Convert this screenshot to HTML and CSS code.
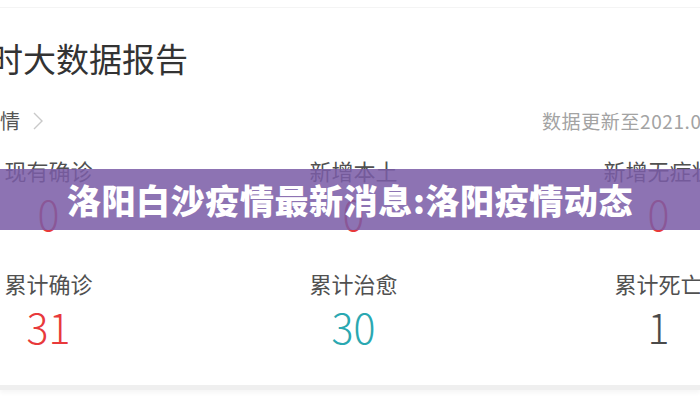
FILE: index.html
```html
<!DOCTYPE html>
<html lang="zh-CN">
<head>
    <meta charset="UTF-8">
    <meta name="viewport" content="width=device-width, initial-scale=1.0">
    <title>洛阳白沙疫情最新消息</title>
    <link rel="stylesheet" href="styles.css">
</head>
<body>
    <div class="card">
        <h2 class="title">实时大数据报告</h2>

        <div class="meta-row">
            <div class="region">疫情
                <svg class="chevron" width="10" height="18" viewBox="0 0 10 18">
                    <path d="M1 1 L9 9 L1 17" fill="none" stroke="#c9c9c9" stroke-width="1.4"/>
                </svg>
            </div>
            <div class="update">数据更新至2021.08.10</div>
        </div>

        <!-- 数据统计 -->
        <div class="stats">
            <div class="stat">
                <div class="label">现有确诊</div>
                <div class="num red">0</div>
            </div>
            <div class="stat">
                <div class="label">新增本土</div>
                <div class="num red">0</div>
            </div>
            <div class="stat">
                <div class="label">新增无症状</div>
                <div class="num red">0</div>
            </div>
            <div class="stat">
                <div class="label">累计确诊</div>
                <div class="num red">31</div>
            </div>
            <div class="stat">
                <div class="label">累计治愈</div>
                <div class="num teal">30</div>
            </div>
            <div class="stat">
                <div class="label">累计死亡</div>
                <div class="num dark">1</div>
            </div>
        </div>
    </div>

    <div class="banner">洛阳白沙疫情最新消息:洛阳疫情动态</div>
</body>
</html>
```

FILE: styles.css
```css
body {
    margin: 0;
    padding-top: 7px;
    width: 700px;
    height: 400px;
    overflow: hidden;
    position: relative;
    background: #fff;
    font-family: "Noto Sans CJK SC", "Liberation Sans", sans-serif;
}
.card {
    border-top: 1px solid #f4f4f4;
    border-bottom: 5px solid #efefef;
    box-shadow: 0 3px 4px rgba(0, 0, 0, 0.04);
    padding-bottom: 35px;
}
.title {
    margin: 30px 0 0 -43px;
    font-size: 33px;
    line-height: 40px;
    font-weight: normal;
    color: #333;
    white-space: nowrap;
}
.meta-row {
    display: grid;
    grid-template-columns: 562px max-content;
    align-items: center;
    margin: 28px 0 0 -20px;
    height: 24px;
}
.region {
    display: flex;
    align-items: center;
    font-size: 20px;
    color: #555;
}
.chevron {
    margin-left: 13px;
}
.update {
    font-size: 19px;
    letter-spacing: 0.6px;
    color: #a3a3a3;
    white-space: nowrap;
}
.stats {
    display: grid;
    grid-template-columns: repeat(3, 305px);
    row-gap: 32px;
    margin: 26px 0 0 -104px;
}
.stat {
    text-align: center;
}
.label {
    font-size: 22px;
    line-height: 28px;
    color: #505050;
    white-space: nowrap;
}
.num {
    margin-top: 5px;
    font-size: 41px;
    line-height: 48px;
    font-weight: 300;
}
.red { color: #e8393b; }
.teal { color: #2aa8b1; }
.dark { color: #4a4a4a; }

/* 标题条盖在数据上方 */
.banner {
    position: absolute;
    left: 0;
    top: 169px;
    width: 700px;
    height: 61px;
    background: rgba(122, 92, 166, 0.86);
    color: #fff;
    font-size: 34px;
    font-weight: 900;
    letter-spacing: 0.6px;
    line-height: 61px;
    text-align: center;
    white-space: nowrap;
}
```
